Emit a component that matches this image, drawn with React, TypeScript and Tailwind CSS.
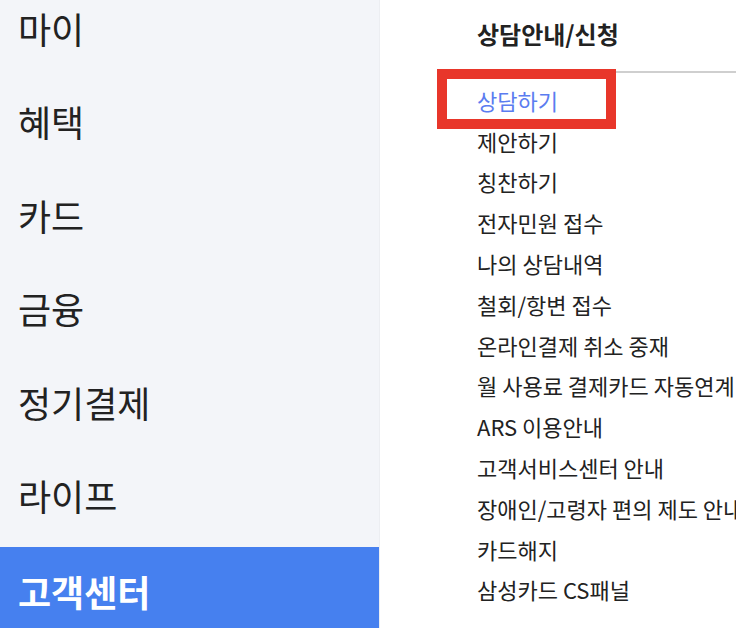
const menus = ["마이", "혜택", "카드", "금융", "정기결제", "라이프", "고객센터"]

const links = [
  "상담하기",
  "제안하기",
  "칭찬하기",
  "전자민원 접수",
  "나의 상담내역",
  "철회/항변 접수",
  "온라인결제 취소 중재",
  "월 사용료 결제카드 자동연계",
  "ARS 이용안내",
  "고객서비스센터 안내",
  "장애인/고령자 편의 제도 안내",
  "카드해지",
  "삼성카드 CS패널",
]

export default function App() {
  return (
    <div
      className="flex w-[736px] h-[628px] overflow-hidden bg-white text-[#222]"
      style={{ fontFamily: '"Noto Sans CJK KR", "Noto Sans", sans-serif' }}
    >
      {/* left menu */}
      <nav className="w-[380px] shrink-0 bg-[#f3f5f9] border-r border-[#eceef2]">
        <ul className="-mt-[19px]">
          {menus.map((m) => {
            const active = m === "고객센터"
            return (
              <li
                key={m}
                className={
                  active
                    ? "mt-[5px] h-[93.5px] flex items-center pl-[18px] pb-[6px] bg-[#4680ef] text-white font-bold text-[36px]"
                    : "h-[93.5px] flex items-center pl-[18px] text-[36px]"
                }
              >
                {m}
              </li>
            )
          })}
        </ul>
      </nav>

      {/* right list */}
      <section className="relative flex-1 pl-[97px] whitespace-nowrap">
        <h2 className="h-[71px] flex items-center text-[24px] font-bold pb-[4px]">상담안내/신청</h2>
        <div className="ml-[-40px] border-t-2 border-[#cfcfcf]" />
        <ul className="pt-[7px]">
          {links.map((l, i) => (
            <li
              key={l}
              className={
                i === 0
                  ? "h-[40.8px] flex items-center text-[22px] text-[#5b7cf0]"
                  : "h-[40.8px] flex items-center text-[22px]"
              }
            >
              {l}
            </li>
          ))}
        </ul>
        {/* highlight box */}
        <div className="absolute left-[57px] top-[69px] w-[179px] h-[60px] border-[10px] border-[#e8362a]" />
      </section>
    </div>
  )
}
